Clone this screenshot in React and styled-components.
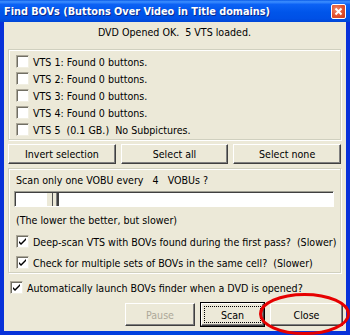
import React from 'react'
import styled, { createGlobalStyle } from 'styled-components'

const Global = createGlobalStyle`
  html, body {
    margin: 0;
    padding: 0;
    background: #fff;
  }
`

const Window = styled.div`
  position: relative;
  width: 350px;
  height: 335px;
  display: flex;
  flex-direction: column;
  background: linear-gradient(90deg, #0831d9 0%, #0046e0 50%, #0831d9 100%);
  font-family: 'DejaVu Sans Condensed', 'DejaVu Sans', sans-serif;
  font-stretch: semi-condensed;
  font-size: 10.6px;
  color: #000;
  overflow: hidden;
`

const TitleBar = styled.div`
  height: 22px;
  flex: none;
  display: flex;
  align-items: center;
  justify-content: space-between;
  padding: 0 4px 0 4px;
  background: linear-gradient(
    180deg,
    #0a5be8 0%,
    #3d8fff 8%,
    #0c62f5 20%,
    #0055ea 55%,
    #0050e6 85%,
    #0046d6 100%
  );
`

const Title = styled.span`
  color: #fff;
  font-weight: bold;
  font-size: 10.8px;
  text-shadow: 1px 1px #0b2a8a;
  white-space: nowrap;
`

const CloseBox = styled.div`
  width: 13px;
  height: 13px;
  border: 1px solid #fff;
  border-radius: 2px;
  background: radial-gradient(circle at 35% 35%, #f08a6c 0%, #e0512e 55%, #c83b1b 100%);
  display: flex;
  align-items: center;
  justify-content: center;
`

const Body = styled.div`
  flex: 1;
  margin: 0 4px 4px 4px;
  background: #ece9d8;
  display: flex;
  flex-direction: column;
  padding: 4px 5px 0 4px;
`

const Header = styled.div`
  text-align: center;
  line-height: 13px;
  height: 13px;
  margin-bottom: 10px;
  white-space: pre;
`

const Group = styled.div`
  border: 1px solid #d0d0bf;
  box-shadow: inset 1px 1px #fff, 1px 1px #fff;
  padding: ${p => p.$pad};
  display: flex;
  flex-direction: column;
`

const Row = styled.label`
  display: flex;
  align-items: center;
  gap: 4px;
  height: 17px;
  margin-left: ${p => p.$indent || 0}px;
  margin-top: ${p => p.$top || 0}px;
  white-space: pre;
`

const Box = styled.span`
  width: 11px;
  height: 11px;
  flex: none;
  background: #fff;
  border: 1px solid;
  border-color: #aca899 #f1efe2 #f1efe2 #aca899;
  box-shadow: inset 1px 1px #716f64;
  display: flex;
  align-items: center;
  justify-content: center;
`

const ButtonRow = styled.div`
  display: grid;
  grid-template-columns: 1fr 1fr 1fr;
  gap: 5px;
  margin: 4px 0 4px 0;
`

const Button = styled.button`
  height: ${p => p.$h || 20}px;
  width: ${p => (p.$w ? p.$w + 'px' : 'auto')};
  padding: 0;
  font-family: inherit;
  font-stretch: inherit;
  font-size: 10.6px;
  background: #ece9d8;
  color: ${p => (p.disabled ? '#aca899' : '#000')};
  border: 1px solid;
  border-color: #fff #404040 #404040 #fff;
  box-shadow: inset -1px -1px #808080;
  position: relative;
  outline: ${p => (p.$default ? '1px solid #000' : 'none')};
  outline-offset: 0;

  &::after {
    content: '';
    display: ${p => (p.$default ? 'block' : 'none')};
    position: absolute;
    inset: 2px;
    border: 1px dotted #000;
  }
`

const Label = styled.div`
  line-height: 13px;
  margin-left: ${p => p.$indent || 0}px;
  margin-top: ${p => p.$top || 0}px;
  white-space: pre;
`

const Track = styled.div`
  height: 14px;
  margin: 4px 6px 0 5px;
  background: #fff;
  border: 1px solid;
  border-color: #9d9d92 #fff #fff #9d9d92;
  box-shadow: inset 1px 1px #404040;
  display: flex;
  align-items: stretch;
  padding-left: 31px;
`

const Thumb = styled.div`
  width: 10px;
  background: #ece9d8;
  border-left: 1px solid #fff;
  border-right: 2px solid #404040;
  box-shadow: inset -1px 0 #808080, inset 5px 0 #ece9d8, inset 6px 0 #505050;
  margin-top: 1px;
`

const Footer = styled.div`
  display: flex;
  justify-content: flex-end;
  gap: 6px;
  margin: 7px -2px 0 0;
`

const Mark = styled.svg`
  position: absolute;
  left: 259px;
  top: 293px;
  pointer-events: none;
`

const Check = () => (
  <svg width="9" height="9" viewBox="0 0 9 9">
    <path d="M1 4 L3 6 L8 1 L8 3 L3 8 L1 6 Z" fill="#000" />
  </svg>
)

const CheckRow = ({ checked, children, indent, top }) => (
  <Row $indent={indent} $top={top}>
    <Box>{checked && <Check />}</Box>
    <span>{children}</span>
  </Row>
)

const vts = [
  'VTS 1: Found 0 buttons.',
  'VTS 2: Found 0 buttons.',
  'VTS 3: Found 0 buttons.',
  'VTS 4: Found 0 buttons.',
  'VTS 5  (0.1 GB.)  No Subpictures.'
]

export default function App() {
  return (
    <>
      <Global />
      <Window>
        <TitleBar>
          <Title>Find BOVs (Buttons Over Video in Title domains)</Title>
          <CloseBox>
            <svg width="9" height="9" viewBox="0 0 9 9">
              <path d="M1.5 1.5 L7.5 7.5 M7.5 1.5 L1.5 7.5" stroke="#fff" strokeWidth="2" />
            </svg>
          </CloseBox>
        </TitleBar>
        <Body>
          <Header>DVD Opened OK.  5 VTS loaded.</Header>
          <Group $pad="3px 0 1px 0">
            {vts.map(v => (
              <CheckRow key={v} indent={7}>
                {v}
              </CheckRow>
            ))}
          </Group>
          <ButtonRow>
            <Button>Invert selection</Button>
            <Button>Select all</Button>
            <Button>Select none</Button>
          </ButtonRow>
          <Group $pad="5px 0 1px 0">
            <Label $indent={7}>Scan only one VOBU every   4   VOBUs ?</Label>
            <Track>
              <Thumb />
            </Track>
            <Label $indent={7} $top={7}>(The lower the better, but slower)</Label>
            <CheckRow checked indent={7} top={6}>
              {'Deep-scan VTS with BOVs found during the first pass?  (Slower)'}
            </CheckRow>
            <CheckRow checked indent={7} top={4}>
              {'Check for multiple sets of BOVs in the same cell?  (Slower)'}
            </CheckRow>
          </Group>
          <CheckRow checked indent={2} top={6}>
            Automatically launch BOVs finder when a DVD is opened?
          </CheckRow>
          <Footer>
            <Button disabled $w={70} $h={23}>Pause</Button>
            <Button $default $w={63} $h={23}>Scan</Button>
            <Button $w={73} $h={23}>Close</Button>
          </Footer>
        </Body>
        <Mark width="91" height="42" viewBox="0 0 91 42">
          <ellipse cx="45.5" cy="21" rx="44" ry="19.5" fill="none" stroke="#e60000" strokeWidth="3" />
        </Mark>
      </Window>
    </>
  )
}
